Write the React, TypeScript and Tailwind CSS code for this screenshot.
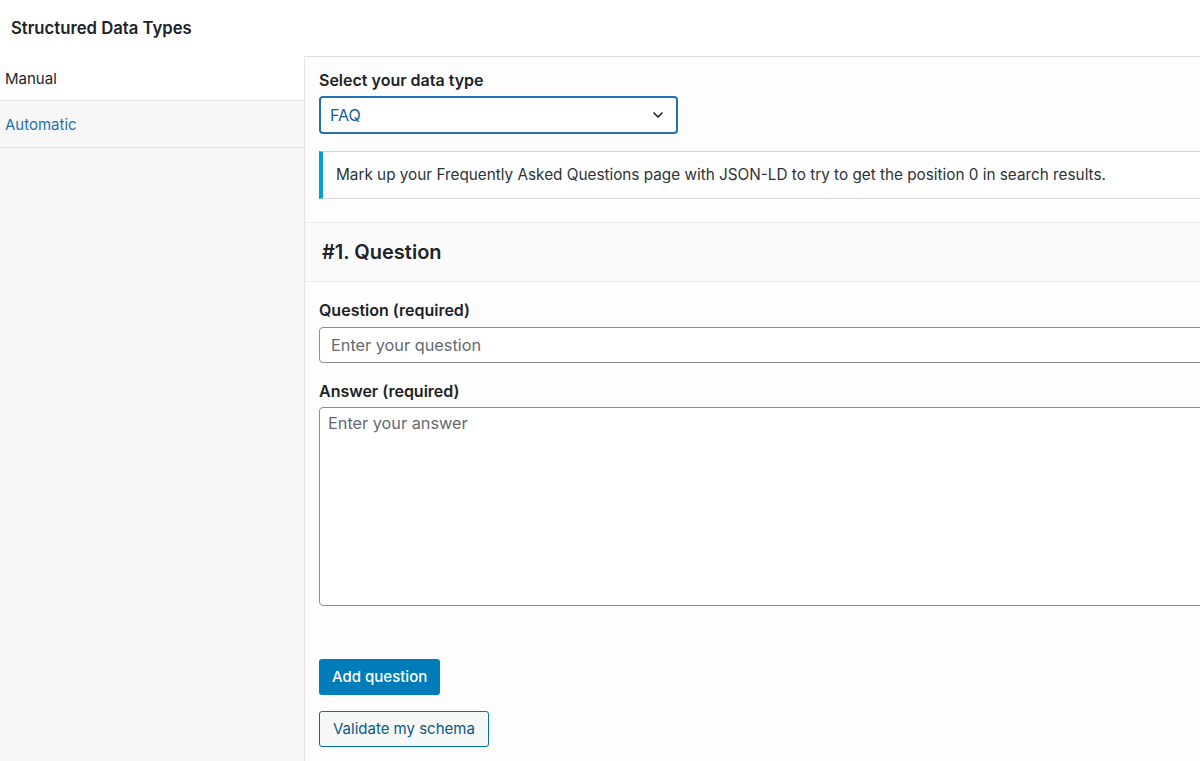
import { ChevronDown } from "lucide-react";

const font = { fontFamily: "Inter, 'Noto Sans', sans-serif" };

const Sidebar = () => {
  const items = [
    { id: "manual", label: "Manual", active: true },
    { id: "automatic", label: "Automatic", active: false },
  ];
  return (
    <div className="flex w-[305px] shrink-0 flex-col border-r border-[#e2e4e7] bg-[#f7f7f7]">
      {items.map((item) => (
        <div
          key={item.id}
          className={`border-b border-[#e5e5e5] pl-[5px] text-[15px] ${
            item.active
              ? "h-[45px] bg-white pt-[12px] text-[#1d2327]"
              : "h-[47px] bg-[#f7f7f7] pt-[13px] text-[#2271b1]"
          }`}
        >
          {item.label}
        </div>
      ))}
    </div>
  );
};

const App = () => {
  return (
    <div className="flex h-[761px] w-[1200px] flex-col overflow-hidden bg-white" style={font}>
      {/* Title */}
      <div className="h-[56px] shrink-0 pl-[11px] pt-[16px] text-[16.7px] font-semibold text-[#1d2327]">
        Structured Data Types
      </div>

      <div className="flex flex-1">
        <Sidebar />

        {/* Main */}
        <div className="flex flex-1 flex-col border-t border-[#dcdcde] bg-[#fdfdfd]">
          <div className="px-[14px] pt-[11px]">
            <label className="block text-[16px] font-semibold text-[#1d2327]">
              Select your data type
            </label>
            <div className="mt-[4px] flex h-[38px] w-[359px] items-center justify-between rounded-[4px] border-2 border-[#2271b1] bg-white pl-[9px] pr-[10px] text-[16px] text-[#135e96]">
              <span>FAQ</span>
              <ChevronDown className="size-[16px] text-[#1d2327]" strokeWidth={2.5} />
            </div>
          </div>

          {/* Notice */}
          <div className="ml-[14px] mt-[17px] flex h-[48px] items-center border-y border-l-4 border-[#d4d5d7] border-l-[#00a0d2] bg-white pl-[13px] text-[15.3px] text-[#2c3338]">
            Mark up your Frequently Asked Questions page with JSON-LD to try to get the position 0 in search results.
          </div>

          {/* Question block */}
          <div className="mt-[23px] border-t border-[#ededed]">
            <div className="flex h-[59px] items-center border-b border-[#ededed] bg-[#fafafa] pl-[17px] text-[20px] font-semibold text-[#1d2327]">
              #1. Question
            </div>

            <div className="px-[14px] pt-[16px]">
              <label className="block text-[16px] font-semibold text-[#1d2327]">
                Question (required)
              </label>
              <input
                type="text"
                placeholder="Enter your question"
                className="mt-[5px] block h-[36px] w-[900px] rounded-[4px] border border-[#8c8f94] bg-white px-[11px] text-[16.3px] text-[#2c3338] placeholder:text-[#646970] outline-none"
                style={font}
              />

              <label className="mt-[16px] block text-[16px] font-semibold text-[#1d2327]">
                Answer (required)
              </label>
              <textarea
                placeholder="Enter your answer"
                className="mt-[4px] block h-[199px] w-[900px] resize-none rounded-[4px] border border-[#8c8f94] bg-white px-[8px] py-[3px] text-[16.3px] text-[#2c3338] placeholder:text-[#646970] outline-none"
                style={font}
              />

              <div className="mt-[53px] flex flex-col items-start gap-[16px]">
                <button className="h-[36px] rounded-[3px] bg-[#007cba] px-[13px] text-[15px] font-medium text-white">
                  Add question
                </button>
                <button className="h-[36px] rounded-[3px] border border-[#0071a1] bg-[#f6f7f7] px-[13px] text-[15px] text-[#0a5a85]">
                  Validate my schema
                </button>
              </div>
            </div>
          </div>
        </div>
      </div>
    </div>
  );
};

export default App;
